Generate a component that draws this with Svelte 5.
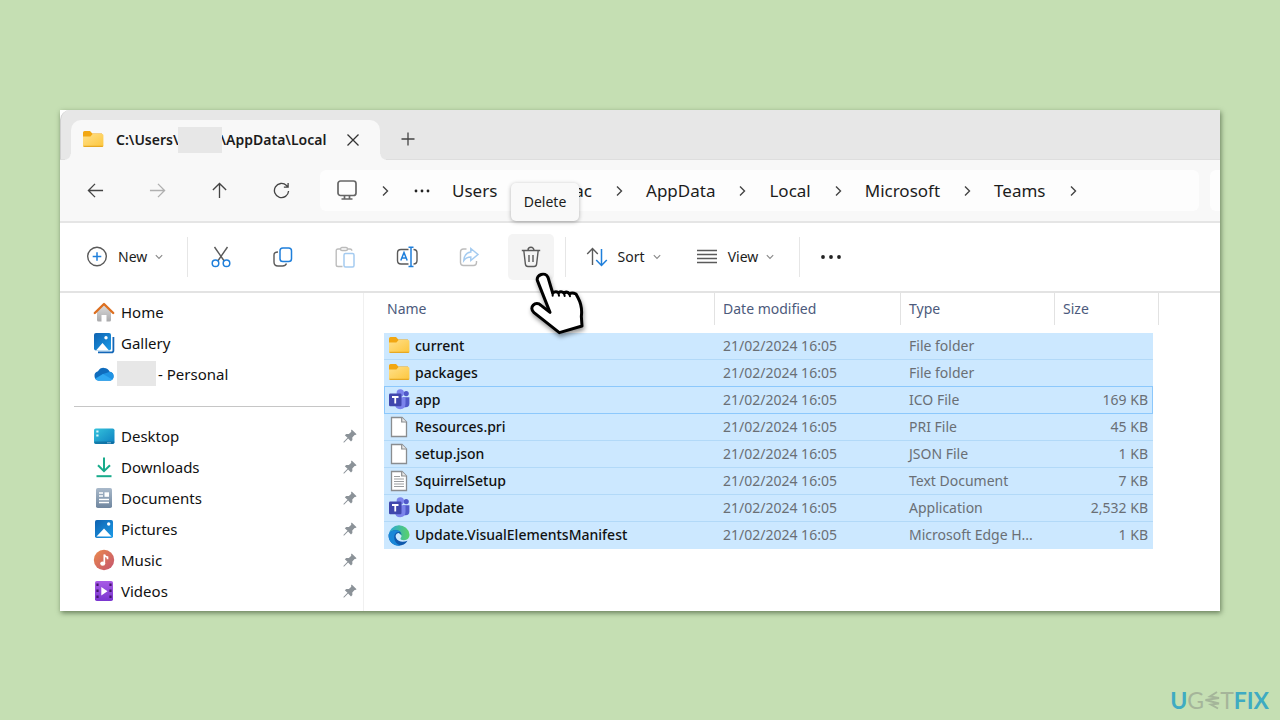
<script>
  const pinned = ['Desktop', 'Downloads', 'Documents', 'Pictures', 'Music', 'Videos'];
  const crumbs = ['AppData', 'Local', 'Microsoft', 'Teams'];
  const date = '21/02/2024 16:05';
  const files = [
    { name: 'current', icon: 'folder', type: 'File folder', size: '' },
    { name: 'packages', icon: 'folder', type: 'File folder', size: '' },
    { name: 'app', icon: 'teams', type: 'ICO File', size: '169 KB', focused: true },
    { name: 'Resources.pri', icon: 'page', type: 'PRI File', size: '45 KB' },
    { name: 'setup.json', icon: 'page', type: 'JSON File', size: '1 KB' },
    { name: 'SquirrelSetup', icon: 'text', type: 'Text Document', size: '7 KB' },
    { name: 'Update', icon: 'teams', type: 'Application', size: '2,532 KB' },
    { name: 'Update.VisualElementsManifest', icon: 'edge', type: 'Microsoft Edge H...', size: '1 KB' }
  ];
</script>

{#snippet chevron()}
  <svg class="chev" width="14" height="14" viewBox="0 0 14 14"><path d="M5 2.500 9.500 7 5 11.500" /></svg>
{/snippet}

{#snippet caret()}
  <svg class="caret" width="8" height="8" viewBox="0 0 8 8"><path d="M.8 2.200 4 5.400 7.200 2.200" /></svg>
{/snippet}

{#snippet icon(name)}
  <svg class="pic" width="22" height="22" viewBox="0 0 22 22">
    {#if name === 'folder'}
      <path d="M1 3.600Q1 2 2.600 2H8l2.300 2.400H20V9H1z" fill="#f2a712" />
      <path d="M1 7.600h7.400L10.600 5H20q1.400 0 1.400 1.300v10.200q0 1.500-1.500 1.500H2.500Q1 18 1 16.500z" fill="url(#g-folder)" />
      <path d="M1.200 16.800q.2 1.200 1.400 1.200h17.200q1.200 0 1.500-1.200z" fill="#e6a823" />
    {:else if name === 'teams'}
      <circle cx="18.200" cy="4.600" r="2.600" fill="#5059c9" />
      <path d="M15 8.200h6.400v6.300q0 3.800-3.700 3.800H15z" fill="#5059c9" />
      <circle cx="12.300" cy="4" r="3.700" fill="#7b83eb" />
      <path d="M7 8.200h10.500v6.600q0 5.400-5.300 5.400T7 14.800z" fill="#7b83eb" />
      <rect x="1" y="4.500" width="12.500" height="12.800" rx="1.200" fill="#4047ad" />
      <path d="M4 8h6.500M7.250 8v6.600" stroke="#fff" stroke-width="1.800" fill="none" />
    {:else if name === 'page' || name === 'text'}
      <path d="M3.500 1.500H14L18.500 6v14.500h-15z" fill="#fff" stroke="#8a8d90" stroke-width="1.300" />
      <path d="M13.700 1.500V6h4.800" fill="#e8e8e8" stroke="#8a8d90" stroke-width="1.200" />
      {#if name === 'text'}
        <path d="M6 6.500h6M6 9h10M6 11.500h10M6 14h10M6 16.500h10" stroke="#9a9da0" fill="none" />
      {/if}
    {:else if name === 'edge'}
      <path d="M.6 11A10.500 10.500 0 0 1 21.500 10.500c.2 3.500-2.300 5.700-5.500 5.700-2.500 0-3.800-1-3.500-2 .8-.8 1-1.600 1-2.600L8 7z" fill="url(#g-edge)" />
      <path d="M.6 12C.5 8 4.400 5.800 8.500 6.200c3.200.3 5.200 2.500 5 5.300-.5-1.800-2-2.800-3.800-2.300-2 .6-2.600 2.800-1.500 5 1.700 3.300 6.300 4.600 11.300 2.500-2 3.400-5.300 5-9 4.900C5 21.400.8 17.300.6 12z" fill="#0f59ad" />
      <path d="M.6 12C.5 8 4.400 5.800 8.500 6.200c1.800.2 3.200.9 4 1.900-3.600-.9-6.300 1.300-6.300 4.900 0 4.500 3.200 7.800 6.600 8.400C6.500 22.800.9 18.500.6 12z" fill="#1887d8" />
    {:else if name === 'Home'}
      <path d="M4 10.500 11 4l7 6.500V19q0 1.500-1.500 1.500h-3V14h-5v6.500h-3Q4 20.500 4 19z" fill="url(#g-home)" />
      <path d="M1.800 12 11 3l9.200 9" fill="none" stroke="#dd6f20" stroke-width="2.400" stroke-linecap="round" stroke-linejoin="round" />
    {:else if name === 'Gallery'}
      <path d="M5 20.300h13.500q1.900 0 1.900-1.900V5" fill="none" stroke="#1367b8" stroke-width="1.800" />
      <rect x="1" y="1" width="17" height="17.500" rx="2" fill="url(#g-blue)" />
      <path d="M3 18.500 9.500 11l6.500 7.500z" fill="#fff" />
      <circle cx="13" cy="5.800" r="1.700" fill="#fff" />
    {:else if name === 'Cloud'}
      <path d="M5.500 17.500A4.700 4.700 0 0 1 5 8.300 6.500 6.500 0 0 1 16.700 8.800a4.500 4.500 0 0 1 .8 8.700z" fill="#0f6cbd" />
      <path d="M2 15.500 10 11l7-2.200a4.500 4.500 0 0 1 .5 8.700h-12q-2.400 0-3.500-2z" fill="#1f93e4" />
      <path d="M2.500 16 10 11l9.700 5.800q-1 .7-2.500.7H5.500q-1.800 0-3-1.500z" fill="#30a8f2" />
    {:else if name === 'Desktop'}
      <rect x="1" y="3.500" width="20.500" height="15.500" rx="1.800" fill="url(#g-desk)" />
      <path d="M3.300 6.500h2.200M3.300 10.500h2.200" stroke="#d8f6fb" stroke-width="2" />
      <path d="M1.500 16.500h19.700v1q-.2 1.500-1.700 1.500H3q-1.500 0-1.500-1.500z" fill="#0b5c8c" opacity=".55" />
      <path d="M14.500 17.800h4" stroke="#fff" stroke-dasharray="1 1" />
    {:else if name === 'Downloads'}
      <path d="M11 1.500v13.200M5 9.200l6 6 6-6" fill="none" stroke="#18ab8b" stroke-width="2" />
      <path d="M3.500 20.200h15" stroke="#18ab8b" stroke-width="2" />
    {:else if name === 'Documents'}
      <rect x="3" y="1" width="16" height="20" rx="1.800" fill="url(#g-doc)" />
      <path d="M6 6h4M6 9h4M6 12.500h10M6 15.500h10" stroke="#fff" stroke-width="1.500" />
      <rect x="11.500" y="5.300" width="4.500" height="4.500" fill="#fff" />
    {:else if name === 'Pictures'}
      <rect x="2" y="2" width="18" height="18" rx="1.800" fill="url(#g-blue)" />
      <path d="M3.500 18.500 11 10.500l7.500 8z" fill="#fff" />
      <circle cx="15.700" cy="6" r="1.700" fill="#fff" />
    {:else if name === 'Music'}
      <circle cx="11" cy="11" r="10.200" fill="url(#g-music)" />
      <ellipse cx="9.700" cy="14.600" rx="2.500" ry="2.200" fill="#fff" />
      <path d="M11.300 14.600V5.500q.7 2.300 3.200 2.700v2" fill="none" stroke="#fff" stroke-width="1.700" />
    {:else if name === 'Videos'}
      <rect x="2" y="1" width="18" height="20" rx="1.800" fill="url(#g-video)" />
      <path d="M4.500 3.500v15M17.500 3.500v15" stroke="#43156f" stroke-width="2.200" stroke-dasharray="2.500 3.500" />
      <path d="M8.300 7v8.500l6.200-4.250z" fill="#fff" />
    {/if}
  </svg>
{/snippet}

{#snippet sideItem(name, pin)}
  <li>
    <a href="#{name.toLowerCase()}">
      {@render icon(name)}
      <span>{name}</span>
      {#if pin}
        <svg class="pin" width="14" height="14" viewBox="0 0 14 14">
          <path d="M8.700.4 13.600 5.300l-1.300.8-.7-.2-2.300 2.500.1 2.700-1.400 1.300L5.100 9.500 1.200 13.400.4 13.600l.2-.9 3.900-3.900-2.700-2.600L3.300 5l2.600.1 2.400-2.400-.3-.9z" fill="#8b9298" />
        </svg>
      {/if}
    </a>
  </li>
{/snippet}

<svg class="defs" width="0" height="0" aria-hidden="true">
  <defs>
    <linearGradient id="g-folder" x1="0" y1="0" x2="1" y2="1"><stop offset="0" stop-color="#ffe08a" /><stop offset="1" stop-color="#fdc63c" /></linearGradient>
    <linearGradient id="g-home" x1="0" y1="0" x2="0" y2="1"><stop offset="0" stop-color="#dcdcdc" /><stop offset="1" stop-color="#a9a9ab" /></linearGradient>
    <linearGradient id="g-blue" x1="0" y1="0" x2="1" y2="1"><stop offset="0" stop-color="#0f62b0" /><stop offset="1" stop-color="#1b9be8" /></linearGradient>
    <linearGradient id="g-desk" x1="0" y1="0" x2="1" y2="1"><stop offset="0" stop-color="#35c3dc" /><stop offset="1" stop-color="#0d7fc0" /></linearGradient>
    <linearGradient id="g-doc" x1="0" y1="0" x2="0" y2="1"><stop offset="0" stop-color="#a9b9ca" /><stop offset="1" stop-color="#6f869f" /></linearGradient>
    <linearGradient id="g-music" x1="0" y1="0" x2="1" y2="1"><stop offset="0" stop-color="#ea8a4c" /><stop offset="1" stop-color="#c4546f" /></linearGradient>
    <linearGradient id="g-video" x1="0" y1="0" x2="0" y2="1"><stop offset="0" stop-color="#a85be6" /><stop offset="1" stop-color="#7a36cf" /></linearGradient>
    <linearGradient id="g-edge" x1="0" y1="0" x2="1" y2="0"><stop offset="0" stop-color="#2aa6dc" /><stop offset="1" stop-color="#5ad267" /></linearGradient>
  </defs>
</svg>

<div class="stage">
  <main class="window">
    <header class="tabs">
      <div class="tab">
        {@render icon('folder')}
        <span class="path">C:\Users\</span><span class="mask"></span><span class="path">\AppData\Local</span>
        <button class="close" aria-label="Close tab">
          <svg width="14" height="14" viewBox="0 0 14 14"><path d="M1.500 1.500l11 11M12.500 1.500l-11 11" stroke="#333" stroke-width="1.300" /></svg>
        </button>
      </div>
      <button class="add" aria-label="New tab">
        <svg width="14" height="14" viewBox="0 0 14 14"><path d="M7 .5v13M.5 7h13" stroke="#444" stroke-width="1.300" /></svg>
      </button>
    </header>

    <nav class="nav" aria-label="Navigation">
      <div class="moves">
        <button aria-label="Back"><svg width="18" height="18" viewBox="0 0 18 18"><path d="M17 9H1.500M8.500 2 1.500 9l7 7" /></svg></button>
        <button aria-label="Forward" disabled><svg width="18" height="18" viewBox="0 0 18 18"><path d="M1 9h15.500M9.500 2l7 7-7 7" /></svg></button>
        <button aria-label="Up"><svg width="18" height="18" viewBox="0 0 18 18"><path d="M9 17V1.500M2 8.500l7-7 7 7" /></svg></button>
        <button aria-label="Refresh"><svg width="18" height="18" viewBox="0 0 18 18"><path d="M16.500 9.500a7.500 7.500 0 1 1-2.200-5.800L16 5.300M16 1v4.500h-4.500" /></svg></button>
      </div>
      <div class="address">
        <svg class="pc" width="22" height="22" viewBox="0 0 22 22"><rect x="2" y="1" width="18" height="14.500" rx="2.500" /><path d="M8.500 15.500v3.300M13.500 15.500v3.300M5.500 19h11" /></svg>
        {@render chevron()}
        <button class="dots" aria-label="More locations"><svg width="16" height="4" viewBox="0 0 16 4"><circle cx="2" cy="2" r="1.400" /><circle cx="8" cy="2" r="1.400" /><circle cx="14" cy="2" r="1.400" /></svg></button>
        <a href="#users">Users</a>
        <a class="hidden-user" href="#user">ac</a>
        {@render chevron()}
        {#each crumbs as crumb}
          <a href="#{crumb.toLowerCase()}">{crumb}</a>
          {@render chevron()}
        {/each}
      </div>
      <div class="search"></div>
    </nav>

    <div class="toolbar">
      <button class="new">
        <svg width="22" height="22" viewBox="0 0 22 22"><circle class="ink" cx="11" cy="10.500" r="9.300" /><path class="blue" d="M11 6.200v8.600M6.700 10.500h8.600" /></svg>
        <span>New</span>{@render caret()}
      </button>
      <i class="rule"></i>
      <div class="group">
        <button aria-label="Cut"><svg width="22" height="22" viewBox="0 0 22 22"><path class="ink" d="M4.500 1 14.200 15M17.500 1 7.800 15" /><circle class="blue" cx="5.500" cy="17.300" r="3.300" /><circle class="blue" cx="16.500" cy="17.300" r="3.300" /></svg></button>
        <button aria-label="Copy"><svg width="22" height="22" viewBox="0 0 22 22"><path class="ink" d="M6 6Q2 6 2 9v7q0 4 4 4h4.500q3 0 4-2.500" /><rect class="blue" x="8" y="2" width="11.500" height="13.500" rx="2.800" /></svg></button>
        <button class="off" aria-label="Paste"><svg width="22" height="22" viewBox="0 0 22 22"><path class="ink" d="M8.500 20.500H4q-1.800 0-1.800-1.800V4.800Q2.200 3 4 3h2.500M13.500 3H16q1.800 0 1.800 1.800" /><rect class="ink" x="6.500" y="1.500" width="7" height="3" rx="1.500" /><rect class="blue" x="10" y="7.500" width="10" height="13.500" rx="1.500" /></svg></button>
        <button aria-label="Rename"><svg width="24" height="22" viewBox="0 0 24 22"><path class="ink" d="M13.500 3.500H6Q2.500 3.500 2.500 7v7.500Q2.500 18 6 18h7.500M18.500 3.500q3.500 0 3.500 3.500v7.500q0 3.500-3.500 3.500" /><path class="blue" d="M5.800 14.500 9 6.500l3.200 8M7 12h4M16 1.500v18.500M13.500 1.200h5M13.500 20.500h5" /></svg></button>
        <button class="off" aria-label="Share"><svg width="22" height="22" viewBox="0 0 22 22"><path class="ink" d="M8.500 3H5.500Q2.500 3 2.500 6v10.500q0 3 3 3h10q3 0 3-3V15" /><path class="blue" d="M12.800 2.500 20 8.500l-7.200 6V11q-4.500 0-7 3.500.5-7.500 7-8.500z" /></svg></button>
        <button class="delete" aria-label="Delete">
          <svg width="22" height="22" viewBox="0 0 22 22"><path class="ink" d="M1.800 4.500h18.400M8 4.300a3 3 0 0 1 6 0M3.800 4.500l1.600 13.700q.3 2.300 2.500 2.300h6.200q2.200 0 2.500-2.300L18.200 4.500M9 9v7M13 9v7" /></svg>
          <span class="tip" role="tooltip">Delete</span>
          <svg class="hand" width="55" height="67" viewBox="630 315 165 201">
            <path d="M652 346c-4-17 24-27 32-9l14 47q9-7 17-1 9-6 17 1 9-6 16 2 9-5 20 1l6 11q14 26 10 56l2 29-68 20-76-60c-18-16 5-37 21-22l27 21z" />
            <path class="knuckles" d="M698 384v8M715 383l2 9M732 384l2 9M748 386l2 8" />
          </svg>
        </button>
      </div>
      <i class="rule"></i>
      <button class="menu sort">
        <svg width="22" height="22" viewBox="0 0 22 22"><path class="ink" d="M6.500 19V2.500M1.200 8l5.300-5.500L11.800 8" /><path class="blue" d="M15.500 3v16.500M10.200 14l5.300 5.500 5.300-5.500" /></svg>
        <span>Sort</span>{@render caret()}
      </button>
      <button class="menu">
        <svg width="22" height="22" viewBox="0 0 22 22"><path class="ink" d="M1 4.500h20M1 8.500h20M1 12.500h20M1 16.500h20" /></svg>
        <span>View</span>{@render caret()}
      </button>
      <i class="rule"></i>
      <button class="more" aria-label="See more"><svg width="22" height="6" viewBox="0 0 22 6"><circle cx="3" cy="3" r="1.900" /><circle cx="11" cy="3" r="1.900" /><circle cx="19" cy="3" r="1.900" /></svg></button>
    </div>

    <div class="body">
      <aside>
        <ul>
          {@render sideItem('Home', false)}
          {@render sideItem('Gallery', false)}
          <li>
            <a class="cloud" href="#personal">{@render icon('Cloud')}<span class="mask"></span><span>- Personal</span></a>
          </li>
        </ul>
        <hr />
        <ul>
          {#each pinned as name}
            {@render sideItem(name, true)}
          {/each}
        </ul>
      </aside>

      <section class="list">
        <table>
          <colgroup><col class="c-name" /><col class="c-date" /><col class="c-type" /><col class="c-size" /><col class="c-end" /></colgroup>
          <thead>
            <tr><th>Name</th><th>Date modified</th><th>Type</th><th>Size</th><td class="end"></td></tr>
          </thead>
          <tbody>
            {#each files as f}
              <tr class:focused={f.focused}>
                <td><span class="file">{@render icon(f.icon)}{f.name}</span></td>
                <td>{date}</td>
                <td>{f.type}</td>
                <td>{f.size}</td>
              </tr>
            {/each}
          </tbody>
        </table>
      </section>
    </div>
  </main>

  <footer class="brand">
    <b>U</b><span>G</span><svg width="16" height="20" viewBox="0 0 16 20"><path d="M13 2 6 6.500l9 1.500L1.500 10 15 13.500 7 14.500l7 4" /></svg><span>T</span><b>FIX</b>
  </footer>
</div>

<style>
  :global(body) {
    margin: 0;
    background: #c5dfb3;
  }
  .defs {
    position: absolute;
  }
  .stage {
    box-sizing: border-box;
    min-height: 100vh;
    padding: 110px 60px 8px;
    display: flex;
    flex-direction: column;
    font: 14px/20px 'Noto Sans', 'Open Sans', sans-serif;
    color: #1c1c1c;
  }
  .window {
    background: #fff;
    box-shadow: 1px 2px 5px rgba(40, 60, 30, 0.6);
  }
  svg {
    display: block;
    flex: none;
    fill: none;
  }
  button {
    font: inherit;
    color: inherit;
    background: none;
    border: 0;
    padding: 0;
    display: flex;
    align-items: center;
    justify-content: center;
  }
  a {
    color: inherit;
    text-decoration: none;
  }
  .mask {
    background: #e7e7e7;
    flex: none;
  }

  .tabs {
    display: flex;
    align-items: flex-end;
    height: 50px;
    box-sizing: border-box;
    padding-left: 10px;
    background: #e7e7e7;
    border-left: 1px solid #cfcfcf;
    border-bottom: 1px solid #dedede;
    border-top-left-radius: 10px;
  }
  .tab {
    position: relative;
    display: flex;
    align-items: center;
    box-sizing: border-box;
    width: 309px;
    height: 40px;
    padding-left: 11px;
    margin-bottom: -1px;
    background: #f8f8f8;
    border-radius: 10px 10px 0 0;
  }
  .tab::before,
  .tab::after {
    content: '';
    position: absolute;
    bottom: 0;
    width: 6px;
    height: 6px;
  }
  .tab::before {
    right: 100%;
    background: radial-gradient(circle at 0 0, transparent 5px, #f8f8f8 6px);
  }
  .tab::after {
    left: 100%;
    background: radial-gradient(circle at 100% 0, transparent 5px, #f8f8f8 6px);
  }
  .path {
    font-weight: 600;
  }
  .tab .pic + .path {
    margin-left: 12px;
  }
  .tab .mask {
    width: 44px;
    height: 26px;
    margin: 0 -1px;
    z-index: 1;
  }
  .close {
    margin-left: auto;
    margin-right: 20px;
  }
  .add {
    width: 56px;
    height: 40px;
  }

  .nav {
    display: flex;
    align-items: center;
    height: 61px;
    background: #f8f8f8;
    border-bottom: 2px solid #e5e5e5;
    overflow: hidden;
  }
  .moves {
    display: flex;
    flex: none;
    padding: 0 8px 0 4px;
  }
  .moves button {
    width: 62px;
    height: 40px;
  }
  .moves svg {
    width: 17px;
    height: 17px;
  }
  .moves path {
    stroke: #444;
    stroke-width: 1.400;
  }
  .moves button:disabled path {
    stroke: #b0b0b0;
  }
  .address,
  .search {
    height: 41px;
    background: #fdfdfd;
    border-radius: 6px;
  }
  .address {
    flex: 1;
    display: flex;
    align-items: center;
    box-sizing: border-box;
    padding-left: 16px;
    margin-right: 11px;
    gap: 20px;
    font-size: 17px;
  }
  .search {
    width: 10px;
    border-radius: 6px 0 0 6px;
  }
  .pc {
    stroke: #666;
    stroke-width: 1.700;
  }
  .chev path {
    stroke: #444;
    stroke-width: 1.400;
  }
  .dots circle,
  .more circle {
    fill: #222;
  }
  .dots {
    padding: 0 2px;
  }
  .hidden-user {
    padding-left: 57px;
  }

  .toolbar {
    display: flex;
    align-items: center;
    height: 68px;
    padding-left: 26px;
    border-bottom: 2px solid #e3e3e3;
  }
  .rule {
    width: 1px;
    height: 40px;
    background: #e6e6e6;
    margin: 0 10px 0 11px;
  }
  .ink {
    stroke: #5a5a5a;
    stroke-width: 1.400;
  }
  .blue {
    stroke: #1f7fdb;
    stroke-width: 1.500;
  }
  .off {
    opacity: 0.4;
  }
  .caret path {
    stroke: #888;
    stroke-width: 1.100;
  }
  .new span,
  .menu span {
    margin: 0 8px 0 10px;
  }
  .new {
    width: 80px;
    margin-right: 10px;
    justify-content: flex-start;
  }
  .group {
    display: flex;
    gap: 16px;
  }
  .group button {
    width: 46px;
    height: 46px;
    border-radius: 5px;
  }
  .group .delete {
    position: relative;
    background: #f4f4f4;
  }
  .tip {
    position: absolute;
    left: 3px;
    top: -51px;
    width: 68px;
    line-height: 38px;
    background: #f9f9f9;
    border-radius: 5px;
    box-shadow: 0 1px 4px rgba(0, 0, 0, 0.3);
  }
  .hand {
    position: absolute;
    left: 22px;
    top: 36px;
    z-index: 2;
    overflow: visible;
    filter: drop-shadow(1px 3px 2px rgba(0, 0, 0, 0.4));
  }
  .hand path {
    fill: #fff;
    stroke: #000;
    stroke-width: 9;
    stroke-linejoin: round;
  }
  .hand .knuckles {
    stroke-width: 6;
    stroke-linecap: round;
  }
  .menu {
    width: 76px;
    margin-right: 36px;
  }
  .sort {
    margin-left: 9px;
  }
  .menu + .rule {
    margin-left: -10px;
  }
  .more {
    width: 42px;
    height: 40px;
  }

  .body {
    display: flex;
  }
  aside {
    box-sizing: border-box;
    width: 304px;
    padding: 3px 13px 5px 14px;
    border-right: 1px solid #f0f0f0;
    font-size: 15px;
    color: #111;
  }
  ul {
    margin: 0;
    padding: 0;
    list-style: none;
  }
  aside a {
    display: flex;
    align-items: center;
    gap: 6px;
    height: 31px;
    padding-left: 19px;
  }
  .pin {
    margin-left: auto;
    margin-right: -7px;
  }
  .cloud {
    gap: 2px;
  }
  .cloud .mask {
    width: 39px;
    height: 25px;
  }
  hr {
    margin: 17px 0 13px;
    border: 0;
    height: 1px;
    background: #c6c6c6;
  }

  .list {
    flex: 1;
    padding-left: 20px;
  }
  table {
    border-collapse: separate;
    border-spacing: 0;
    table-layout: fixed;
    width: 775px;
  }
  .c-name {
    width: 331px;
  }
  .c-date {
    width: 186px;
  }
  .c-type {
    width: 154px;
  }
  .c-size {
    width: 98px;
  }
  .c-end {
    width: 6px;
  }
  th {
    height: 32px;
    padding: 0 0 0 8px;
    border-right: 1px solid #e2e2e2;
    text-align: left;
    font-weight: 400;
    color: #4c5a7c;
  }
  th:first-child {
    padding-left: 3px;
  }
  th:nth-child(4) {
    border-right: 0;
  }
  .end {
    padding: 0;
    border-right: 1px solid #e2e2e2;
  }
  tbody::before {
    content: '';
    display: block;
    height: 8px;
  }
  tbody td {
    box-sizing: border-box;
    height: 27px;
    padding: 0 0 0 8px;
    background: #cce8ff;
    border-bottom: 1px solid #b2d9f8;
    color: #6a6f75;
    white-space: nowrap;
  }
  tbody tr:last-child td {
    border-bottom-color: #cce8ff;
  }
  tbody td:first-child {
    padding-left: 4px;
    color: #111;
    font-weight: 500;
  }
  tbody td:last-child {
    padding-right: 5px;
    text-align: right;
  }
  tbody tr:has(+ .focused) td,
  .focused td {
    border-bottom-color: #8cc8fc;
  }
  .focused td:first-child {
    border-left: 1px solid #8cc8fc;
    padding-left: 3px;
  }
  .focused td:last-child {
    border-right: 1px solid #8cc8fc;
    padding-right: 4px;
  }
  .file {
    display: flex;
    align-items: center;
    gap: 5px;
  }

  .brand {
    display: flex;
    align-items: center;
    align-self: flex-end;
    margin-top: auto;
    margin-right: -49px;
    font: 23px/24px Lato, sans-serif;
    color: #a5b59a;
  }
  .brand b {
    color: #3fabc2;
  }
  .brand path {
    stroke: #a5b59a;
    stroke-width: 2;
  }
</style>
